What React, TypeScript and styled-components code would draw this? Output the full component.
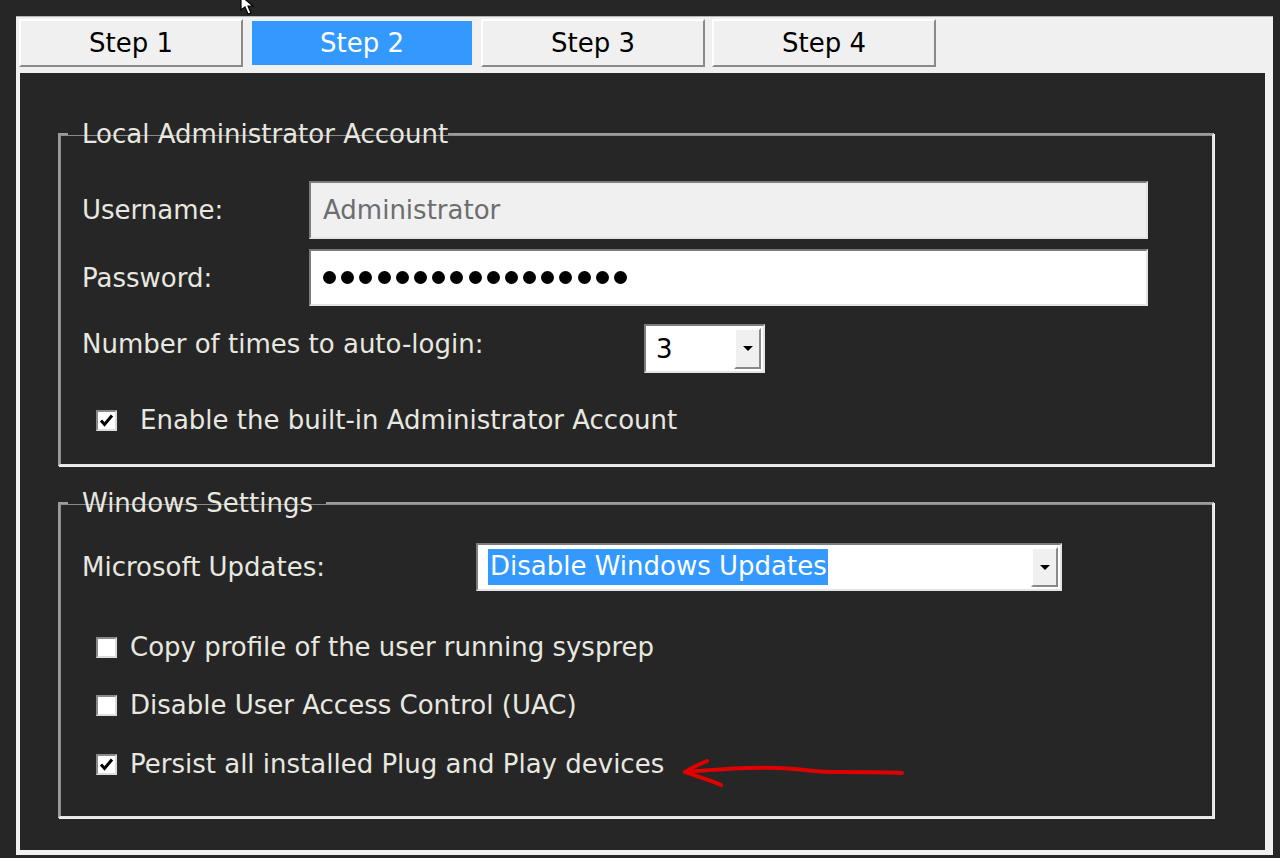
import React from "react";
import styled, { createGlobalStyle, css } from "styled-components";

const GlobalStyle = createGlobalStyle`
  html, body {
    margin: 0;
    padding: 0;
    background: #262626;
  }
  body {
    width: 1280px;
    height: 858px;
    overflow: hidden;
    font-family: "DejaVu Sans", Tahoma, Verdana, sans-serif;
  }
`;

const TEXT = "#e8e8e0";
const SUNKEN = css`
  border: 2px solid;
  border-color: #7c7c7c #e4e4e4 #e4e4e4 #7c7c7c;
`;
const RAISED = css`
  border: 2px solid;
  border-color: #ffffff #8a8a8a #8a8a8a #ffffff;
`;

const App: React.FC = () => {
  return (
    <>
      <GlobalStyle />
      <Cursor />
      <Window>
        {/* Tabs */}
        <TabBar>
          <Tab>Step 1</Tab>
          <Tab $active>Step 2</Tab>
          <Tab>Step 3</Tab>
          <Tab>Step 4</Tab>
        </TabBar>

        <Panel>
          {/* Local Administrator Account */}
          <Group $pt={32} $pb={29}>
            <Legend $pr={0}>Local Administrator Account</Legend>
            <Row $h={58}>
              <Label $w={227}>Username:</Label>
              <TextBox $disabled>Administrator</TextBox>
            </Row>
            <Row $h={57} $mt={10}>
              <Label $w={227}>Password:</Label>
              <TextBox>
                {Array.from({ length: 17 }).map((_, i) => (
                  <Dot key={i} />
                ))}
              </TextBox>
            </Row>
            <Row $h={49} $mt={18}>
              <Label $w={562} $shift={-5}>
                Number of times to auto-login:
              </Label>
              <Combo $w={121}>
                <ComboValue>3</ComboValue>
                <DropButton>
                  <Caret />
                </DropButton>
              </Combo>
            </Row>
            <CheckRow $mt={32}>
              <CheckBox $checked />
              <CheckLabel $gap={23}>Enable the built-in Administrator Account</CheckLabel>
            </CheckRow>
          </Group>

          {/* Windows Settings */}
          <Group $pt={25} $pb={37} $mt={22}>
            <Legend $pr={13}>Windows Settings</Legend>
            <Row $h={48}>
              <Label $w={394}>Microsoft Updates:</Label>
              <Combo $w={586}>
                <ComboValue>
                  <Selected>Disable Windows Updates</Selected>
                </ComboValue>
                <DropButton>
                  <Caret />
                </DropButton>
              </Combo>
            </Row>
            <CheckRow $mt={41}>
              <CheckBox />
              <CheckLabel $gap={13}>Copy profile of the user running sysprep</CheckLabel>
            </CheckRow>
            <CheckRow $mt={28}>
              <CheckBox />
              <CheckLabel $gap={13}>Disable User Access Control (UAC)</CheckLabel>
            </CheckRow>
            <CheckRow $mt={29}>
              <CheckBox $checked />
              <CheckLabel $gap={13}>Persist all installed Plug and Play devices</CheckLabel>
              <RedArrow />
            </CheckRow>
          </Group>
        </Panel>
      </Window>
    </>
  );
};

const CheckBox: React.FC<{ $checked?: boolean }> = ({ $checked }) => (
  <Box>
    {$checked && (
      <svg width="17" height="17" viewBox="0 0 17 17">
        <path d="M3 8.5 L6.5 12.5 L14 3.5" fill="none" stroke="#000" strokeWidth="3" />
      </svg>
    )}
  </Box>
);

const RedArrow: React.FC = () => (
  <ArrowSvg width="226" height="48" viewBox="0 0 226 48">
    <path
      d="M4 32 C40 29 70 27 95 28 C125 29 140 33 160 32 C185 32 205 32 221 33"
      fill="none"
      stroke="#e00000"
      strokeWidth="4"
      strokeLinecap="round"
    />
    <path
      d="M26 21 C16 25 9 29 4 32 C14 36 30 40 40 45"
      fill="none"
      stroke="#e00000"
      strokeWidth="4"
      strokeLinecap="round"
      strokeLinejoin="round"
    />
  </ArrowSvg>
);

const Cursor: React.FC = () => (
  <CursorSvg width="20" height="22" viewBox="0 0 20 22">
    <path d="M1 0 L1 14 L5 11 L8 18 L11 17 L8 10 L13 10 Z" fill="#fff" stroke="#000" strokeWidth="1.2" />
  </CursorSvg>
);

const CursorSvg = styled.svg`
  position: absolute;
  left: 240px;
  top: -4px;
  z-index: 5;
`;

const Window = styled.div`
  width: 1257px;
  height: 839px;
  margin: 16px 0 0 16px;
  padding: 2px 8px 5px 3px;
  box-sizing: border-box;
  background: #f0f0f0;
  border-top: 1px solid #b4b4b4;
`;

const TabBar = styled.div`
  display: flex;
  gap: 7px;
  height: 48px;
  margin-bottom: 6px;
`;

const Tab = styled.div<{ $active?: boolean }>`
  width: 224px;
  height: 48px;
  box-sizing: border-box;
  display: flex;
  align-items: center;
  justify-content: center;
  font-size: 26px;
  color: #000;
  background: #f0f0f0;
  ${RAISED};
  ${(p) =>
    p.$active &&
    css`
      background: #3399ff;
      color: #fff;
      border-color: #f0f0f0;
    `}
`;

const Panel = styled.div`
  width: 1245px;
  height: 777px;
  box-sizing: border-box;
  margin-left: 1px;
  padding: 46px 51px 0 38px;
  background: #262626;
  display: flex;
  flex-direction: column;
`;

const Group = styled.fieldset<{ $pt: number; $pb: number; $mt?: number }>`
  margin: ${(p) => p.$mt ?? 0}px 0 0 0;
  padding: ${(p) => p.$pt}px 64px ${(p) => p.$pb}px 22px;
  border: 2px solid;
  border-color: #9c9c9c #e6e6e6 #e6e6e6 #9c9c9c;
  box-shadow: 1px 1px 0 #8a8a8a inset, 1px 1px 0 #f2f2f2;
  min-width: 0;
`;

const Legend = styled.legend<{ $pr: number }>`
  margin-left: -14px;
  padding: 0 ${(p) => p.$pr}px 0 14px;
  font-size: 26px;
  line-height: 30px;
  color: ${TEXT};
`;

const Row = styled.div<{ $h: number; $mt?: number }>`
  display: flex;
  align-items: center;
  height: ${(p) => p.$h}px;
  margin-top: ${(p) => p.$mt ?? 0}px;
`;

const Label = styled.div<{ $w: number; $shift?: number }>`
  width: ${(p) => p.$w}px;
  flex-shrink: 0;
  font-size: 26px;
  line-height: 30px;
  color: ${TEXT};
  position: relative;
  top: ${(p) => p.$shift ?? 0}px;
`;

const TextBox = styled.div<{ $disabled?: boolean }>`
  flex: 1;
  height: 100%;
  box-sizing: border-box;
  ${SUNKEN};
  display: flex;
  align-items: center;
  gap: 5.2px;
  padding-left: 12px;
  font-size: 26px;
  color: #6d6d6d;
  background: ${(p) => (p.$disabled ? "#f0f0f0" : "#ffffff")};
`;

const Dot = styled.span`
  width: 13px;
  height: 13px;
  border-radius: 50%;
  background: #000;
  flex-shrink: 0;
`;

const Combo = styled.div<{ $w: number }>`
  width: ${(p) => p.$w}px;
  height: 100%;
  box-sizing: border-box;
  ${SUNKEN};
  background: #fff;
  display: flex;
  align-items: stretch;
`;

const ComboValue = styled.div`
  flex: 1;
  display: flex;
  align-items: center;
  padding-left: 10px;
  font-size: 26px;
  color: #000;
`;

const Selected = styled.span`
  background: #3399ff;
  color: #fff;
  padding: 2px 1px 3px 2px;
  line-height: 31px;
`;

const DropButton = styled.div`
  width: 27px;
  margin: 2px;
  box-sizing: border-box;
  ${RAISED};
  background: #f0f0f0;
  display: flex;
  align-items: center;
  justify-content: center;
`;

const Caret = styled.span`
  width: 0;
  height: 0;
  border-left: 5px solid transparent;
  border-right: 5px solid transparent;
  border-top: 5px solid #000;
`;

const CheckRow = styled.div<{ $mt: number }>`
  display: flex;
  align-items: center;
  height: 30px;
  margin-top: ${(p) => p.$mt}px;
  padding-left: 14px;
`;

const Box = styled.span`
  width: 21px;
  height: 21px;
  box-sizing: border-box;
  border: 2px solid;
  border-color: #8a8a8a #dcdcdc #dcdcdc #8a8a8a;
  background: #fff;
  display: flex;
  align-items: center;
  justify-content: center;
  flex-shrink: 0;
`;

const CheckLabel = styled.span<{ $gap: number }>`
  margin-left: ${(p) => p.$gap}px;
  font-size: 26px;
  line-height: 30px;
  color: ${TEXT};
  white-space: nowrap;
`;

const ArrowSvg = styled.svg`
  margin-left: 17px;
  flex-shrink: 0;
`;

export default App;
